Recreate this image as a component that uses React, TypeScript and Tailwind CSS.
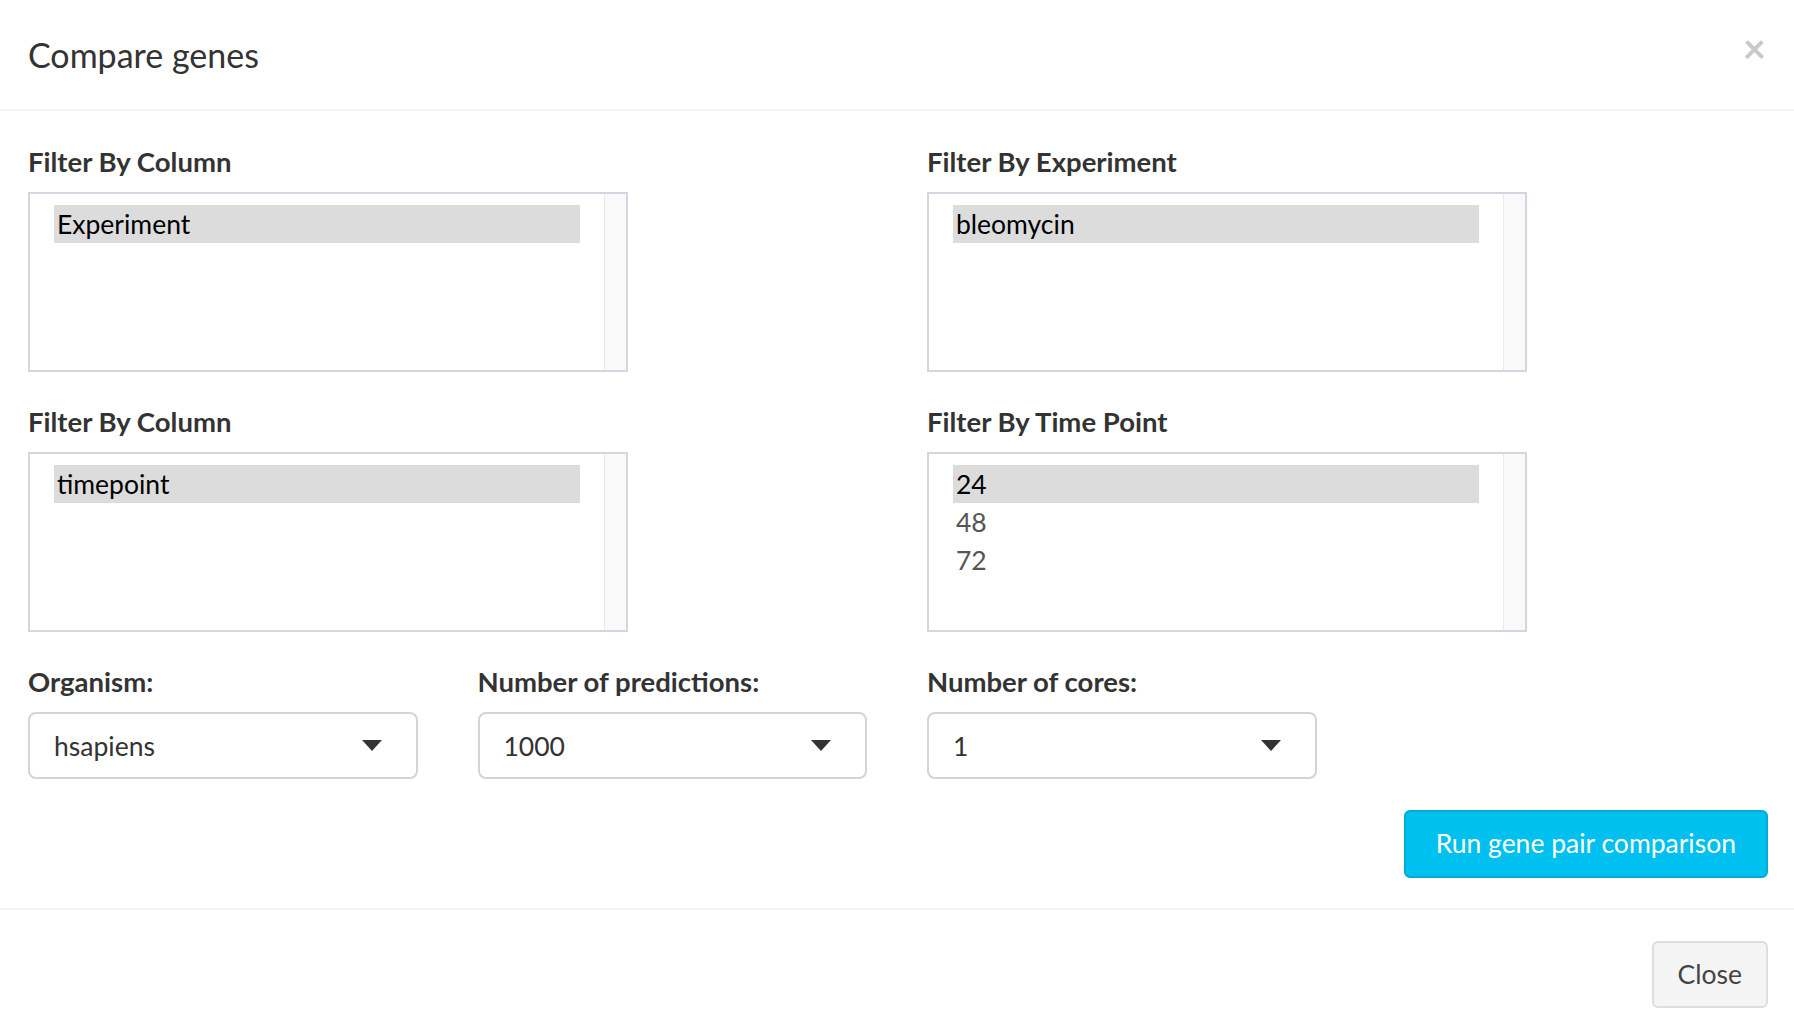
import React from "react";

const ListBox = ({ options, selected }: { options: string[]; selected: number }) => (
  <div className="flex w-[600px] h-[180px] border-2 border-[#d2d6de] bg-white">
    <div className="flex-1 pl-[24px] pr-[24px] pt-[11px] text-[26.5px]">
      {options.map((opt, i) => (
        <div
          key={opt}
          className={
            i === selected
              ? "h-[38px] leading-[38px] pl-[3px] bg-[#dcdcdc] text-black"
              : "h-[38px] leading-[38px] pl-[3px] text-[#555]"
          }
        >
          {opt}
        </div>
      ))}
    </div>
    <div className="w-[22px] bg-[#f9f9f9] border-l border-[#ebebeb]" />
  </div>
);

const Field = ({ label, children }: { label: string; children: React.ReactNode }) => (
  <div className="mb-[30px]">
    <div className="h-[40px] leading-[40px] mb-[10px] font-bold text-[27.5px] text-[#333]">{label}</div>
    {children}
  </div>
);

const SelectBox = ({ value }: { value: string }) => (
  <div className="flex items-center justify-between h-[67px] border-2 border-[#d4d4d4] rounded-[8px] pl-[24px] pr-[34px] bg-white">
    <span className="text-[26.5px] text-[#333] mt-[3px]">{value}</span>
    <svg width="20" height="11" viewBox="0 0 20 11">
      <polygon points="0,0 20,0 10,11" fill="#333" />
    </svg>
  </div>
);

export default function App() {
  return (
    <div className="w-[1794px] h-[1034px] overflow-hidden bg-white text-[#333] font-['Lato',sans-serif]">
      {/* header */}
      <div className="flex items-center justify-between h-[111px] border-b-2 border-[#f4f4f4] pl-[28px] pr-[28px]">
        <h4 className="text-[34px] text-[#333] font-normal">Compare genes</h4>
        <span className="text-[40px] font-bold text-[#c8c8c8] leading-none -mt-[14px]">×</span>
      </div>

      {/* body */}
      <div className="pl-[28px] pr-[26px] pt-[31px] pb-[30px]">
        <div className="grid grid-cols-2 gap-x-[60px] pr-[2px]">
          <Field label="Filter By Column">
            <ListBox options={["Experiment"]} selected={0} />
          </Field>
          <Field label="Filter By Experiment">
            <ListBox options={["bleomycin"]} selected={0} />
          </Field>
          <Field label="Filter By Column">
            <ListBox options={["timepoint"]} selected={0} />
          </Field>
          <Field label="Filter By Time Point">
            <ListBox options={["24", "48", "72"]} selected={0} />
          </Field>
        </div>

        <div className="grid grid-cols-4 gap-x-[60px] pr-[2px]">
          <Field label="Organism:">
            <SelectBox value="hsapiens" />
          </Field>
          <Field label="Number of predictions:">
            <SelectBox value="1000" />
          </Field>
          <Field label="Number of cores:">
            <SelectBox value="1" />
          </Field>
        </div>

        <div className="flex justify-end mt-[1px]">
          <button className="h-[68px] px-[30px] rounded-[6px] bg-[#00c0ef] border-2 border-[#00acd6] text-white text-[26.5px]">
            Run gene pair comparison
          </button>
        </div>
      </div>

      {/* footer */}
      <div className="flex justify-end border-t-2 border-[#f4f4f4] pl-[28px] pr-[26px] pt-[31px]">
        <button className="h-[67px] px-[24px] rounded-[6px] bg-[#f4f4f4] border-2 border-[#dddddd] text-[#444] text-[26.5px]">
          Close
        </button>
      </div>
    </div>
  );
}
